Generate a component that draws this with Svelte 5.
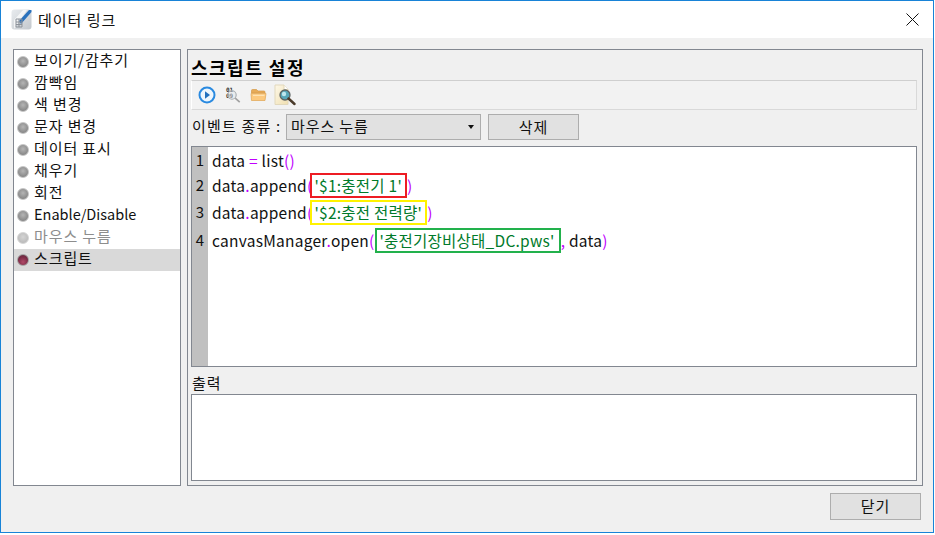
<script>
  const items = [
    { label: "보이기/감추기" },
    { label: "깜빡임" },
    { label: "색 변경" },
    { label: "문자 변경" },
    { label: "데이터 표시" },
    { label: "채우기" },
    { label: "회전" },
    { label: "Enable/Disable", latin: true },
    { label: "마우스 누름", disabled: true },
    { label: "스크립트", selected: true }
  ]
  const rows = [
    { n: 1, h: 25 },
    { n: 2, h: 27 },
    { n: 3, h: 28 },
    { n: 4, h: 28 }
  ]
</script>

<div class="window">
  <header class="titlebar">
    <svg class="appicon" width="21" height="21" viewBox="0 0 21 21">
      <defs>
        <linearGradient id="ai" x1="0" y1="0" x2="1" y2="1">
          <stop offset="0" stop-color="#e8ebee" />
          <stop offset="1" stop-color="#c3c8cd" />
        </linearGradient>
      </defs>
      <rect x="0.500" y="0.500" width="20" height="20" rx="3" fill="url(#ai)" />
      <path d="M3 20 L3 11 L12 1 L16 1 Z" fill="#fff" opacity=".7" />
      <path d="M8 12 L18 1 L20.500 1 L20.500 3 L10 15 Z" fill="#2a72bd" />
      <path d="M5 10h6v8h-6z" fill="none" stroke="#8b9199" stroke-width="1" />
      <path d="M5 13h6M5 15.500h6M8 10v8" stroke="#8b9199" stroke-width="1" />
    </svg>
    <span class="wintitle">데이터 링크</span>
    <svg class="close" width="13" height="13" viewBox="0 0 13 13">
      <path d="M.5.5l12 12M12.5.5l-12 12" stroke="#111" stroke-width="1" fill="none" />
    </svg>
  </header>

  <div class="body">
    <div class="main">
      <ul class="list">
        {#each items as item}
          <li class:selected={item.selected} class:disabled={item.disabled} class:latin={item.latin}>
            <span class="dot"></span><span class="txt">{item.label}</span>
          </li>
        {/each}
      </ul>

      <section class="panel">
        <h2>스크립트 설정</h2>
        <div class="toolbar">
          <svg width="20" height="20" viewBox="0 0 20 20">
            <circle cx="10" cy="10" r="7.500" fill="#eef6fd" stroke="#2a8ae0" stroke-width="2" />
            <path d="M8 6.200v7.600l5-3.800z" fill="#2270bd" />
          </svg>
          <svg width="20" height="20" viewBox="0 0 20 20">
            <text x="3" y="6.500" class="bits">01</text>
            <text x="3" y="13" class="bits">09</text>
            <circle cx="9" cy="10" r="4.200" fill="#dfe6ea" fill-opacity=".5" stroke="#a5aaae" stroke-width="1.100" />
            <path d="M12.200 13.200l4.500 4" stroke="#a0a0a0" stroke-width="1.600" />
          </svg>
          <svg width="20" height="20" viewBox="0 0 20 20">
            <path d="M2.500 5.500a1 1 0 0 1 1-1h4l1.500 1.500h6a1 1 0 0 1 1 1v1h-13.500z" fill="#e6ab58" stroke="#d59a48" stroke-width=".7" />
            <path d="M2 8.500h15l-1 7h-13.500z" fill="#fcc97e" stroke="#e0a552" stroke-width=".7" />
            <path d="M4 10.300h11.500" stroke="#feeac2" stroke-width="1" />
          </svg>
          <svg class="docicon" width="24" height="24" viewBox="0 0 24 24">
            <defs>
              <linearGradient id="pg" x1="0" y1="0" x2="1" y2="1">
                <stop offset="0" stop-color="#fdf8e8" />
                <stop offset="1" stop-color="#f0dfb0" />
              </linearGradient>
            </defs>
            <path d="M3 2h9l4 4.500v15h-13z" fill="url(#pg)" stroke="#e2d8bc" stroke-width="1" />
            <path d="M12 2v4.500h4" fill="#fff" stroke="#e2d8bc" stroke-width="1" />
            <circle cx="13" cy="12" r="5" fill="#57a6b8" stroke="#5f6464" stroke-width="1.300" />
            <circle cx="12" cy="11" r="2.200" fill="#bfe6ee" />
            <path d="M16.500 15.500l6 5.500" stroke="#4a3a2a" stroke-width="2.400" stroke-linecap="round" />
          </svg>
        </div>

        <div class="event">
          <span class="event-label">이벤트 종류 :</span>
          <div class="select">
            <span>마우스 누름</span>
            <i class="caret"></i>
          </div>
          <button class="btn del">삭제</button>
        </div>

        <div class="editor">
          <div class="gutter">
            {#each rows as r}
              <div class="num" style="height: {r.h}px">{r.n}</div>
            {/each}
          </div>
          <div class="code">
            <div class="line" style="height: {rows[0].h}px">data <b class="op">=</b> list<b class="op">()</b></div>
            <div class="line" style="height: {rows[1].h}px">data<b class="op">.</b>append<b class="op">(</b><span class="str red">'$1:충전기 1'</span><b class="op">)</b></div>
            <div class="line" style="height: {rows[2].h}px">data<b class="op">.</b>append<b class="op">(</b><span class="str yellow">'$2:충전 전력량'</span><b class="op">)</b></div>
            <div class="line" style="height: {rows[3].h}px">canvasManager<b class="op">.</b>open<b class="op">(</b><span class="str green">'충전기장비상태_DC.pws'</span><b class="op">,</b> data<b class="op">)</b></div>
          </div>
        </div>

        <div class="out-label">출력</div>
        <div class="output"></div>
      </section>
    </div>

    <footer class="foot">
      <button class="btn closebtn">닫기</button>
    </footer>
  </div>
</div>

<style>
  :global(body) {
    margin: 0;
    background: #fff;
  }

  .window {
    width: 932px;
    height: 531px;
    border: 1px solid #1883d7;
    display: flex;
    flex-direction: column;
    font-family: "Noto Sans CJK KR", "Noto Sans", sans-serif;
    font-size: 15px;
    letter-spacing: 0.9px;
    color: #111;
    overflow: hidden;
  }

  .titlebar {
    height: 37px;
    flex: none;
    background: #fff;
    display: flex;
    align-items: center;
    padding-left: 10px;
    padding-right: 14px;
  }

  .appicon {
    margin-right: 6px;
  }

  .wintitle {
    flex: 1;
    font-size: 15px;
    letter-spacing: 1px;
    margin-bottom: 1px;
  }

  .body {
    flex: 1;
    background: #f0f0f0;
    display: flex;
    flex-direction: column;
    padding: 11px 11px 0 12px;
    min-height: 0;
  }

  .main {
    display: flex;
    gap: 6px;
    height: 437px;
    flex: none;
  }

  .list {
    width: 166px;
    flex: none;
    margin: 0;
    padding: 1px 0 0;
    list-style: none;
    background: #fff;
    border: 1px solid #828790;
  }

  .list li {
    height: 22px;
    display: flex;
    align-items: center;
    gap: 6px;
    padding-left: 3px;
    line-height: 22px;
    white-space: nowrap;
  }

  .txt {
    position: relative;
    top: -2px;
  }

  .list li.latin {
    font-size: 14.500px;
    letter-spacing: 0;
  }

  .list li.selected {
    background: #d9d9d9;
  }

  .list li.disabled {
    color: #8d8d8d;
  }

  .dot {
    width: 12px;
    height: 12px;
    margin-right: -1px;
    border-radius: 50%;
    flex: none;
    background: radial-gradient(circle at 50% 40%, #b5b5b5, #8a8a8a 70%, #a8a8a8);
    border: 1px solid #c4c4c4;
    box-sizing: border-box;
  }

  .disabled .dot {
    background: radial-gradient(circle at 50% 40%, #d4d4d4, #bcbcbc 70%, #cfcfcf);
    border-color: #d5d5d5;
  }

  .selected .dot {
    background: radial-gradient(circle at 50% 70%, #b04a68, #7a2a45 60%, #5a3a48);
    border-color: #a5a5a5;
  }

  .panel {
    flex: none;
    border: 1px solid #828790;
    padding: 0 5px 0 3px;
    width: 726px;
    display: flex;
    flex-direction: column;
  }

  h2 {
    margin: 0;
    height: 30px;
    line-height: 34px;
    font-size: 18px;
    letter-spacing: 1.500px;
    font-weight: 700;
    color: #000;
  }

  .toolbar {
    height: 28px;
    flex: none;
    background: #f2f2f2;
    border: 1px solid #d9d9d9;
    border-left-color: #fff;
    border-top-color: #cfcfcf;
    display: flex;
    align-items: center;
    gap: 6px;
    padding-left: 5px;
  }

  .docicon {
    margin-left: -3px;
  }

  .bits {
    font-family: "DejaVu Sans Mono", monospace;
    font-size: 6px;
    letter-spacing: 0;
    font-weight: 700;
    fill: #333;
  }

  .event {
    display: flex;
    align-items: center;
    margin-top: 4px;
    height: 26px;
    flex: none;
  }

  .event-label {
    width: 95px;
    flex: none;
    padding-left: 1px;
    box-sizing: border-box;
    line-height: 22px;
    height: 24px;
    letter-spacing: 1.200px;
    white-space: nowrap;
  }

  .select {
    width: 195px;
    height: 26px;
    box-sizing: border-box;
    background: #e1e1e1;
    border: 1px solid #adadad;
    display: flex;
    align-items: center;
    justify-content: space-between;
    padding: 0 6px 0 4px;
    line-height: 22px;
  }

  .select span {
    margin-bottom: 2px;
  }

  .caret {
    width: 0;
    height: 0;
    border-left: 3.500px solid transparent;
    border-right: 3.500px solid transparent;
    border-top: 4px solid #111;
  }

  .btn {
    font: inherit;
    letter-spacing: inherit;
    color: #111;
    background: #e1e1e1;
    border: 1px solid #adadad;
    padding: 0 0 2px;
  }

  .del {
    width: 91px;
    height: 26px;
    margin-left: 7px;
  }

  .editor {
    margin-top: 6px;
    height: 221px;
    flex: none;
    box-sizing: border-box;
    border: 1px solid #828790;
    background: #fff;
    display: flex;
  }

  .gutter {
    width: 16px;
    flex: none;
    background: #c0c0c0;
  }

  .num {
    text-align: center;
    line-height: 26px;
    font-size: 15px;
    letter-spacing: 0;
  }

  .code {
    padding: 0 0 0 4px;
    font-size: 15.500px;
    letter-spacing: 0.25px;
    white-space: nowrap;
  }

  .line {
    line-height: 26px;
  }

  .op {
    font-weight: 400;
    color: #c000ff;
  }

  .str {
    color: #007a2a;
    display: inline-block;
    box-sizing: border-box;
    height: 25px;
    line-height: 21px;
    padding: 0 3px 0 2px;
    border: 2px solid transparent;
  }

  .red {
    border-color: #ed1c24;
    margin-left: -2px;
  }

  .yellow {
    border-color: #fff200;
    margin-left: -2px;
  }

  .green {
    border-color: #22b14c;
    margin-left: 1px;
    padding-right: 4px;
  }

  .out-label {
    height: 27px;
    line-height: 32px;
    flex: none;
    padding-left: 1px;
  }

  .output {
    height: 87px;
    flex: none;
    box-sizing: border-box;
    border: 1px solid #828790;
    background: #fff;
  }

  .foot {
    flex: 1;
    display: flex;
    justify-content: flex-end;
    align-items: flex-start;
    padding-top: 7px;
  }

  .closebtn {
    width: 91px;
    height: 27px;
    margin-right: 1px;
  }
</style>
